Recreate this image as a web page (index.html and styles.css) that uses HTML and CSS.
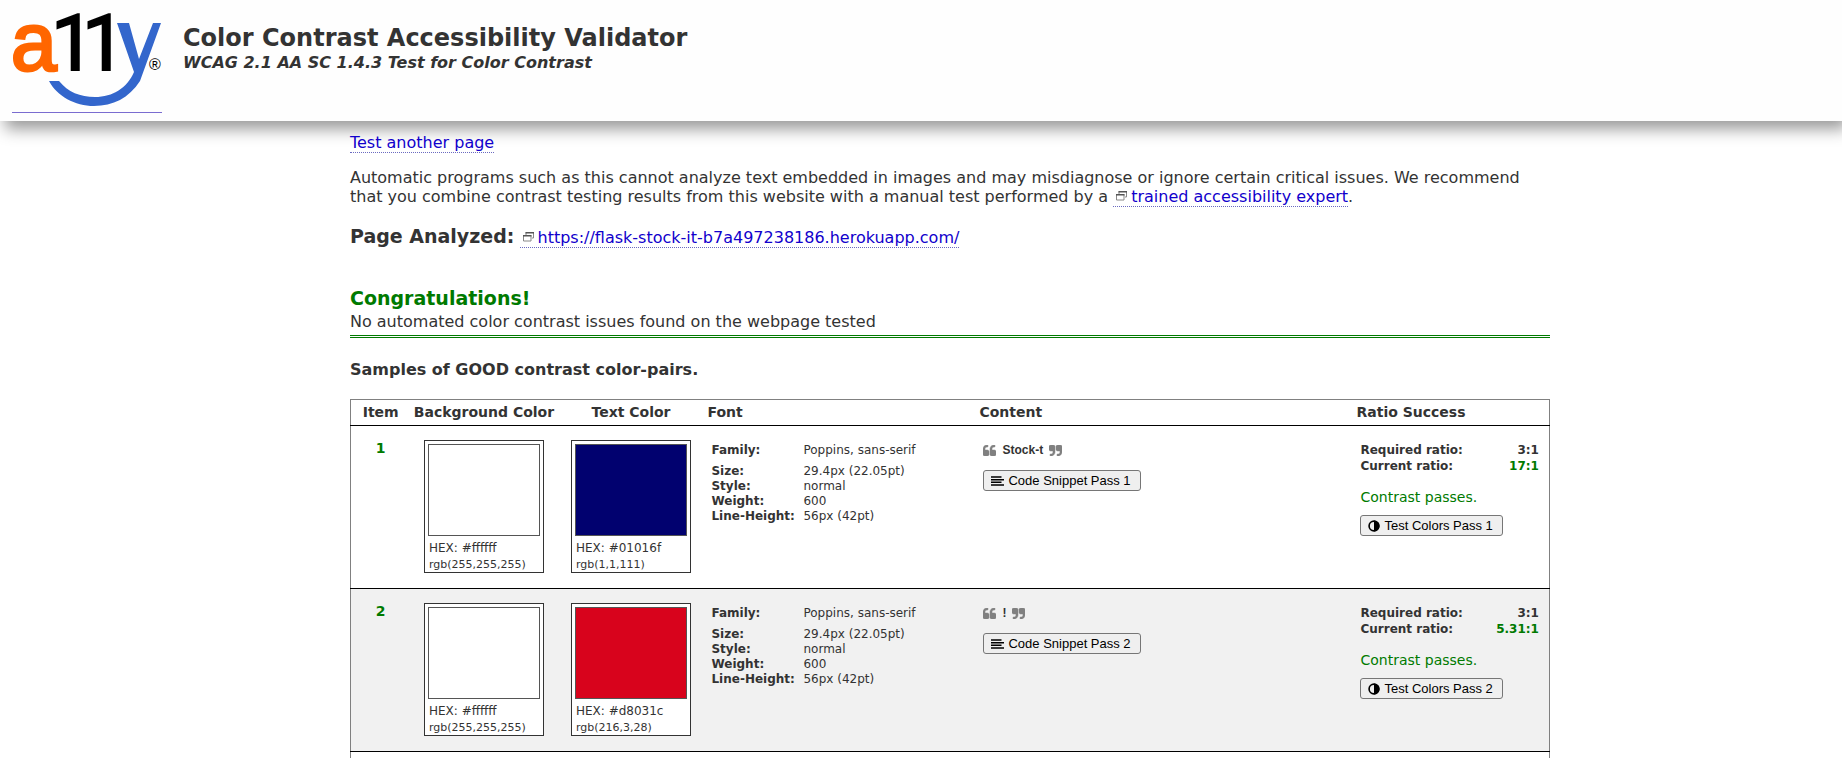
FILE: index.html
```
<!DOCTYPE html>
<html lang="en">
<head>
<meta charset="utf-8">
<title>Color Contrast Accessibility Validator</title>
<link rel="stylesheet" href="styles.css">
</head>
<body>
<svg class="defs" aria-hidden="true">
  <symbol id="window" viewBox="0 0 11 11"><path d="M3 4V1.500h7.500V7H9M.5 4.500h7.500V10H.5z" fill="none" stroke="#888"/><path d="M2.500 1h8.500v1.500H2.500zM0 4h8.500v1.500H0z" fill="#555"/></symbol>
  <symbol id="quote-left" viewBox="64 128 1664 1408"><path fill="#808080" stroke="#808080" stroke-width="60" d="M832 960v384q0 80-56 136t-136 56h-384q-80 0-136-56t-56-136v-704q0-104 40.500-198.500t109.500-163.500 163.500-109.500 198.500-40.500h64q26 0 45 19t19 45v128q0 26-19 45t-45 19h-64q-106 0-181 75t-75 181v32q0 40 28 68t68 28h224q80 0 136 56t56 136zm896 0v384q0 80-56 136t-136 56h-384q-80 0-136-56t-56-136v-704q0-104 40.500-198.500t109.500-163.500 163.500-109.500 198.500-40.500h64q26 0 45 19t19 45v128q0 26-19 45t-45 19h-64q-106 0-181 75t-75 181v32q0 40 28 68t68 28h224q80 0 136 56t56 136z"/></symbol>
  <symbol id="lines" viewBox="0 0 13 10"><path d="M0 1h10.500M0 3.700h13M0 6.300h10.500M0 9h13" stroke="#000" stroke-width="1.600"/></symbol>
  <symbol id="contrast" viewBox="0.500 0.500 11 11"><circle cx="6" cy="6" r="4.500" fill="none" stroke="#000" stroke-width="1.500"/><path d="M6 1a5 5 0 0 1 0 10z"/></symbol>
</svg>
<header class="site-header">
  <a class="logo" href="#" aria-label="a11y home">
    <svg viewBox="0 0 150 103" role="img" aria-label="a11y">
      <text class="logo-a" x="-1" y="61">a</text>
      <text class="logo-1" x="39 70" y="61">11</text>
      <path d="M105 14h12l10 36 14-36h8l-21 58C117 89 101 97 82 97S45 87 37 72h10C56 83 68 88 83 88c18 0 32-9 39-25z" fill="#36c"/>
      <text class="logo-r" x="137" y="61">®</text>
    </svg>
  </a>
  <div class="titles">
    <h1>Color Contrast Accessibility Validator</h1>
    <p>WCAG 2.1 AA SC 1.4.3 Test for Color Contrast</p>
  </div>
</header>
<main>
  <p class="again"><a href="#">Test another page</a></p>
  <p class="notice">Automatic programs such as this cannot analyze text embedded in images and may misdiagnose or ignore certain critical issues. We recommend that you combine contrast testing results from this website with a manual test performed by a <a href="#"><svg class="window"><use href="#window"/></svg>trained accessibility expert</a>.</p>
  <p class="analyzed"><strong>Page Analyzed:</strong> <a href="#"><svg class="window"><use href="#window"/></svg>https://flask-stock-it-b7a497238186.herokuapp.com/</a></p>
  <section class="result">
    <h2>Congratulations!</h2>
    <p>No automated color contrast issues found on the webpage tested</p>
  </section>
  <h3>Samples of GOOD contrast color-pairs.</h3>
  <table class="pairs">
    <colgroup><col class="c-item"><col class="c-bg"><col class="c-text"><col class="c-font"><col class="c-content"><col class="c-ratio"></colgroup>
    <thead><tr><th class="mid">Item</th><th class="mid">Background Color</th><th class="mid">Text Color</th><th>Font</th><th>Content</th><th>Ratio Success</th></tr></thead>
    <tbody>
      <tr>
        <td class="num">1</td>
        <td><div class="swatch"><div class="chip white"></div><div>HEX: #ffffff</div><div class="rgb">rgb(255,255,255)</div></div></td>
        <td><div class="swatch"><div class="chip navy"></div><div>HEX: #01016f</div><div class="rgb">rgb(1,1,111)</div></div></td>
        <td><dl class="font"><dt>Family:</dt><dd>Poppins, sans-serif</dd><dt>Size:</dt><dd>29.4px (22.05pt)</dd><dt>Style:</dt><dd>normal</dd><dt>Weight:</dt><dd>600</dd><dt>Line-Height:</dt><dd>56px (42pt)</dd></dl></td>
        <td class="content"><div class="quoted"><svg><use href="#quote-left"/></svg><b>Stock-t</b><svg class="flip"><use href="#quote-left"/></svg></div><button type="button"><svg class="lines"><use href="#lines"/></svg>Code Snippet Pass 1</button></td>
        <td class="ratio"><dl><dt>Required ratio:</dt><dd>3:1</dd><dt>Current ratio:</dt><dd class="good">17:1</dd></dl><p>Contrast passes.</p><button type="button"><svg class="contrast"><use href="#contrast"/></svg>Test Colors Pass 1</button></td>
      </tr>
      <tr>
        <td class="num">2</td>
        <td><div class="swatch"><div class="chip white"></div><div>HEX: #ffffff</div><div class="rgb">rgb(255,255,255)</div></div></td>
        <td><div class="swatch"><div class="chip red"></div><div>HEX: #d8031c</div><div class="rgb">rgb(216,3,28)</div></div></td>
        <td><dl class="font"><dt>Family:</dt><dd>Poppins, sans-serif</dd><dt>Size:</dt><dd>29.4px (22.05pt)</dd><dt>Style:</dt><dd>normal</dd><dt>Weight:</dt><dd>600</dd><dt>Line-Height:</dt><dd>56px (42pt)</dd></dl></td>
        <td class="content"><div class="quoted"><svg><use href="#quote-left"/></svg><b>!</b><svg class="flip"><use href="#quote-left"/></svg></div><button type="button"><svg class="lines"><use href="#lines"/></svg>Code Snippet Pass 2</button></td>
        <td class="ratio"><dl><dt>Required ratio:</dt><dd>3:1</dd><dt>Current ratio:</dt><dd class="good">5.31:1</dd></dl><p>Contrast passes.</p><button type="button"><svg class="contrast"><use href="#contrast"/></svg>Test Colors Pass 2</button></td>
      </tr>
      <tr class="next"><td colspan="6"></td></tr>
    </tbody>
  </table>
</main>
</body>
</html>
```
FILE: styles.css
```
* { box-sizing: border-box; }
body {
  margin: 0;
  overflow: hidden;
  height: 100vh;
  background: #fff;
  color: #333;
  font: 16px/19px Verdana, "DejaVu Sans", sans-serif;
}
h1, h2, h3, p, dl, dd { margin: 0; }
a { color: #1100cc; text-decoration: none; border-bottom: 1px dotted #6a6ac0; }
.defs { position: absolute; width: 0; height: 0; }

.site-header {
  display: flex;
  gap: 21px;
  padding: 9px 12px 8px;
  background: #fefefe;
  box-shadow: 5px 8px 15px #999;
}
.logo { width: 150px; border-bottom: 1px solid #7a6cd0; }
.logo svg { display: block; width: 150px; height: 103px; overflow: visible; }
.logo-a { font-family: "Liberation Sans", Arial, sans-serif; font-size: 82px; fill: #f60; stroke: #f60; stroke-width: 3px; }
.logo-1 { font-family: Roboto, sans-serif; font-size: 78px; stroke: #000; stroke-width: 2px; }
.logo-r { font-family: "Liberation Sans", Arial, sans-serif; font-size: 16px; }
.titles { padding-top: 14px; }
.titles h1 { font-size: 24px; line-height: 30px; }
.titles p { font-size: 16px; line-height: 19px; font-weight: bold; font-style: italic; }

main { width: 1200px; max-width: 80%; margin-left: 19%; padding-top: 12px; }
.notice { margin-top: 16px; }
.window { width: 11px; height: 11px; margin: 0 4px 0 3px; vertical-align: 1px; }
.analyzed { margin-top: 18px; line-height: 24px; }
.analyzed strong { font-size: 19px; }
.result { margin-top: 35px; padding-bottom: 4px; border-bottom: 3px double #007a00; }
.result h2 { font-size: 19px; line-height: 27px; color: #007a00; }
h3 { margin: 22px 0 19px; font-size: 16px; line-height: 20px; }

.pairs {
  width: 100%;
  table-layout: fixed;
  border-collapse: collapse;
  border: 1px solid #808080;
  font-size: 12px;
  line-height: 15px;
}
.c-item { width: 60px; }
.c-bg { width: 147px; }
.c-text { width: 147px; }
.c-font { width: 272px; }
.c-content { width: 377px; }
th { height: 26px; padding: 0 3px; font-size: 14px; text-align: left; white-space: nowrap; }
th.mid, .num { text-align: center; }
.pairs tbody tr { border-top: 1px solid #000; }
.pairs tbody tr:nth-child(2) { background: #f1f1f1; }
td { height: 163px; padding: 14px 7px; vertical-align: top; }
.next td { height: 40px; }
.num { color: #007a00; font-size: 14px; line-height: 17px; font-weight: bold; }
.swatch { width: 120px; margin: 0 auto; padding: 3px 3px 0; border: 1px solid #333; background: #fff; }
.swatch div:not(.chip) { padding-left: 1px; line-height: 17px; }
.swatch .chip { height: 92px; margin-bottom: 4px; border: 1px solid #555; }
.white { background: #fff; }
.navy { background: #01016f; }
.red { background: #d8031c; }
.swatch div.rgb { font-size: 11px; line-height: 15px; }
.font { display: grid; grid-template-columns: 92px 1fr; padding-top: 3px; }
.font dt, .ratio dt, .ratio dd { font-weight: bold; }
.font dt:first-of-type, .font dd:first-of-type { margin-bottom: 6px; }
.quoted { display: flex; align-items: center; gap: 6px; height: 20px; }
.quoted svg { width: 13px; height: 11px; }
.quoted b { font: bold 12px/16px "Liberation Sans", Arial, sans-serif; }
.flip { transform: rotate(180deg); }
button {
  display: flex;
  align-items: center;
  gap: 4px;
  height: 21px;
  padding: 0 9px 0 7px;
  border: 1px solid #767676;
  border-radius: 3px;
  background: #efefef;
  color: #000;
  font: 13px/16px "Liberation Sans", Arial, sans-serif;
}
.content button { margin-top: 10px; }
.lines { width: 13px; height: 10px; }
.contrast { width: 12px; height: 12px; }
.ratio dl { display: grid; grid-template-columns: auto auto; padding: 2px 3px 0 0; line-height: 16px; }
.ratio dd { text-align: right; }
.ratio .good { color: #007a00; }
.ratio p { margin: 14px 0 9px; color: #007a00; font-size: 14px; line-height: 18px; }
```
